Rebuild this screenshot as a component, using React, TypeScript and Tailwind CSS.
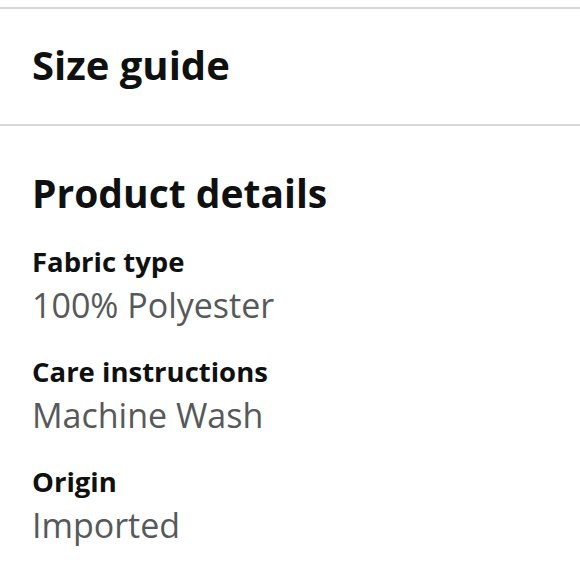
const details = [
  { label: "Fabric type", value: "100% Polyester" },
  { label: "Care instructions", value: "Machine Wash" },
  { label: "Origin", value: "Imported" },
];

const App = () => {
  return (
    <div className="min-h-screen bg-white pt-[7px] font-['Open_Sans',sans-serif] text-[#0f1111]">
      <div className="border-t-2 border-[#d5d9d9] px-8 pt-8 pb-[35px]">
        <h2 className="text-[40px] leading-[48px] font-bold">Size guide</h2>
      </div>
      <div className="border-t-2 border-[#d5d9d9] px-8 pt-[43px]">
        <h2 className="text-[39px] leading-[48px] font-bold">Product details</h2>
        <div className="mt-6 flex flex-col gap-6">
          {details.map((d) => (
            <div key={d.label}>
              <div className="text-[27.5px] leading-[42px] font-bold">{d.label}</div>
              <div className="text-[34px] leading-[44px] text-[#565959]">{d.value}</div>
            </div>
          ))}
        </div>
      </div>
    </div>
  );
};

export default App;
